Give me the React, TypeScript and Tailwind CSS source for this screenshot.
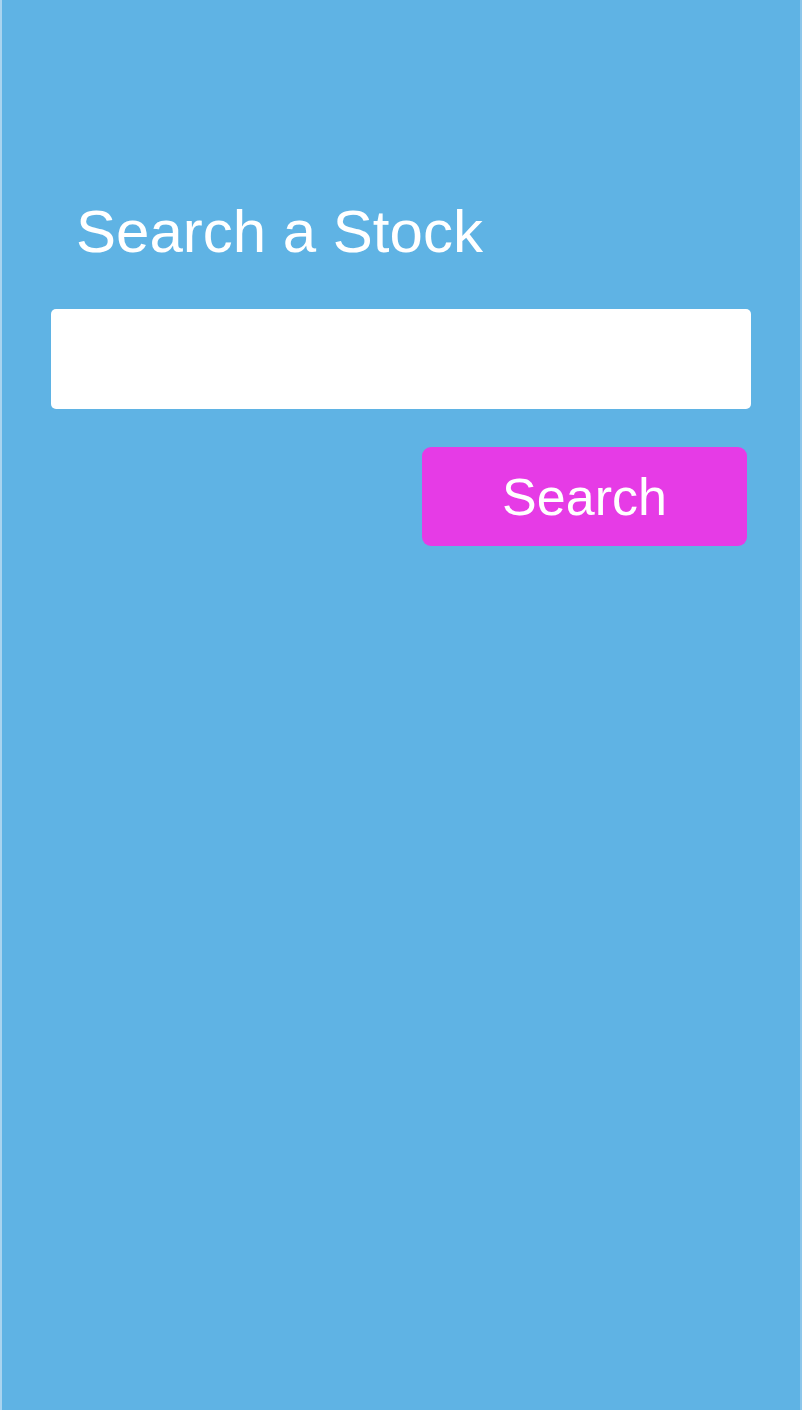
import { useState } from 'react'

export default function App() {
  const [query, setQuery] = useState('')

  return (
    <div
      className="min-h-[1410px] w-full bg-[#5fb3e4] border-l-2 border-r-2 border-l-[#a9d4ef] border-r-[#8cc6ea]"
      style={{ fontFamily: '"Liberation Sans", Arial, sans-serif' }}
    >
      <div className="pt-[202px] px-[49px]">
        <h1 className="pl-[25px] text-[60px] leading-[60px] font-normal text-white">Search a Stock</h1>

        <input
          type="text"
          value={query}
          onChange={e => setQuery(e.target.value)}
          className="mt-[47px] block w-full h-[100px] rounded-[5px] bg-white px-6 text-[32px] text-gray-800 outline-none"
        />

        <div className="flex justify-end mt-[38px] pr-[4px]">
          <button className="w-[325px] h-[99px] rounded-[9px] bg-[#e63be6] text-white text-[52px] leading-none">
            Search
          </button>
        </div>
      </div>
    </div>
  )
}
